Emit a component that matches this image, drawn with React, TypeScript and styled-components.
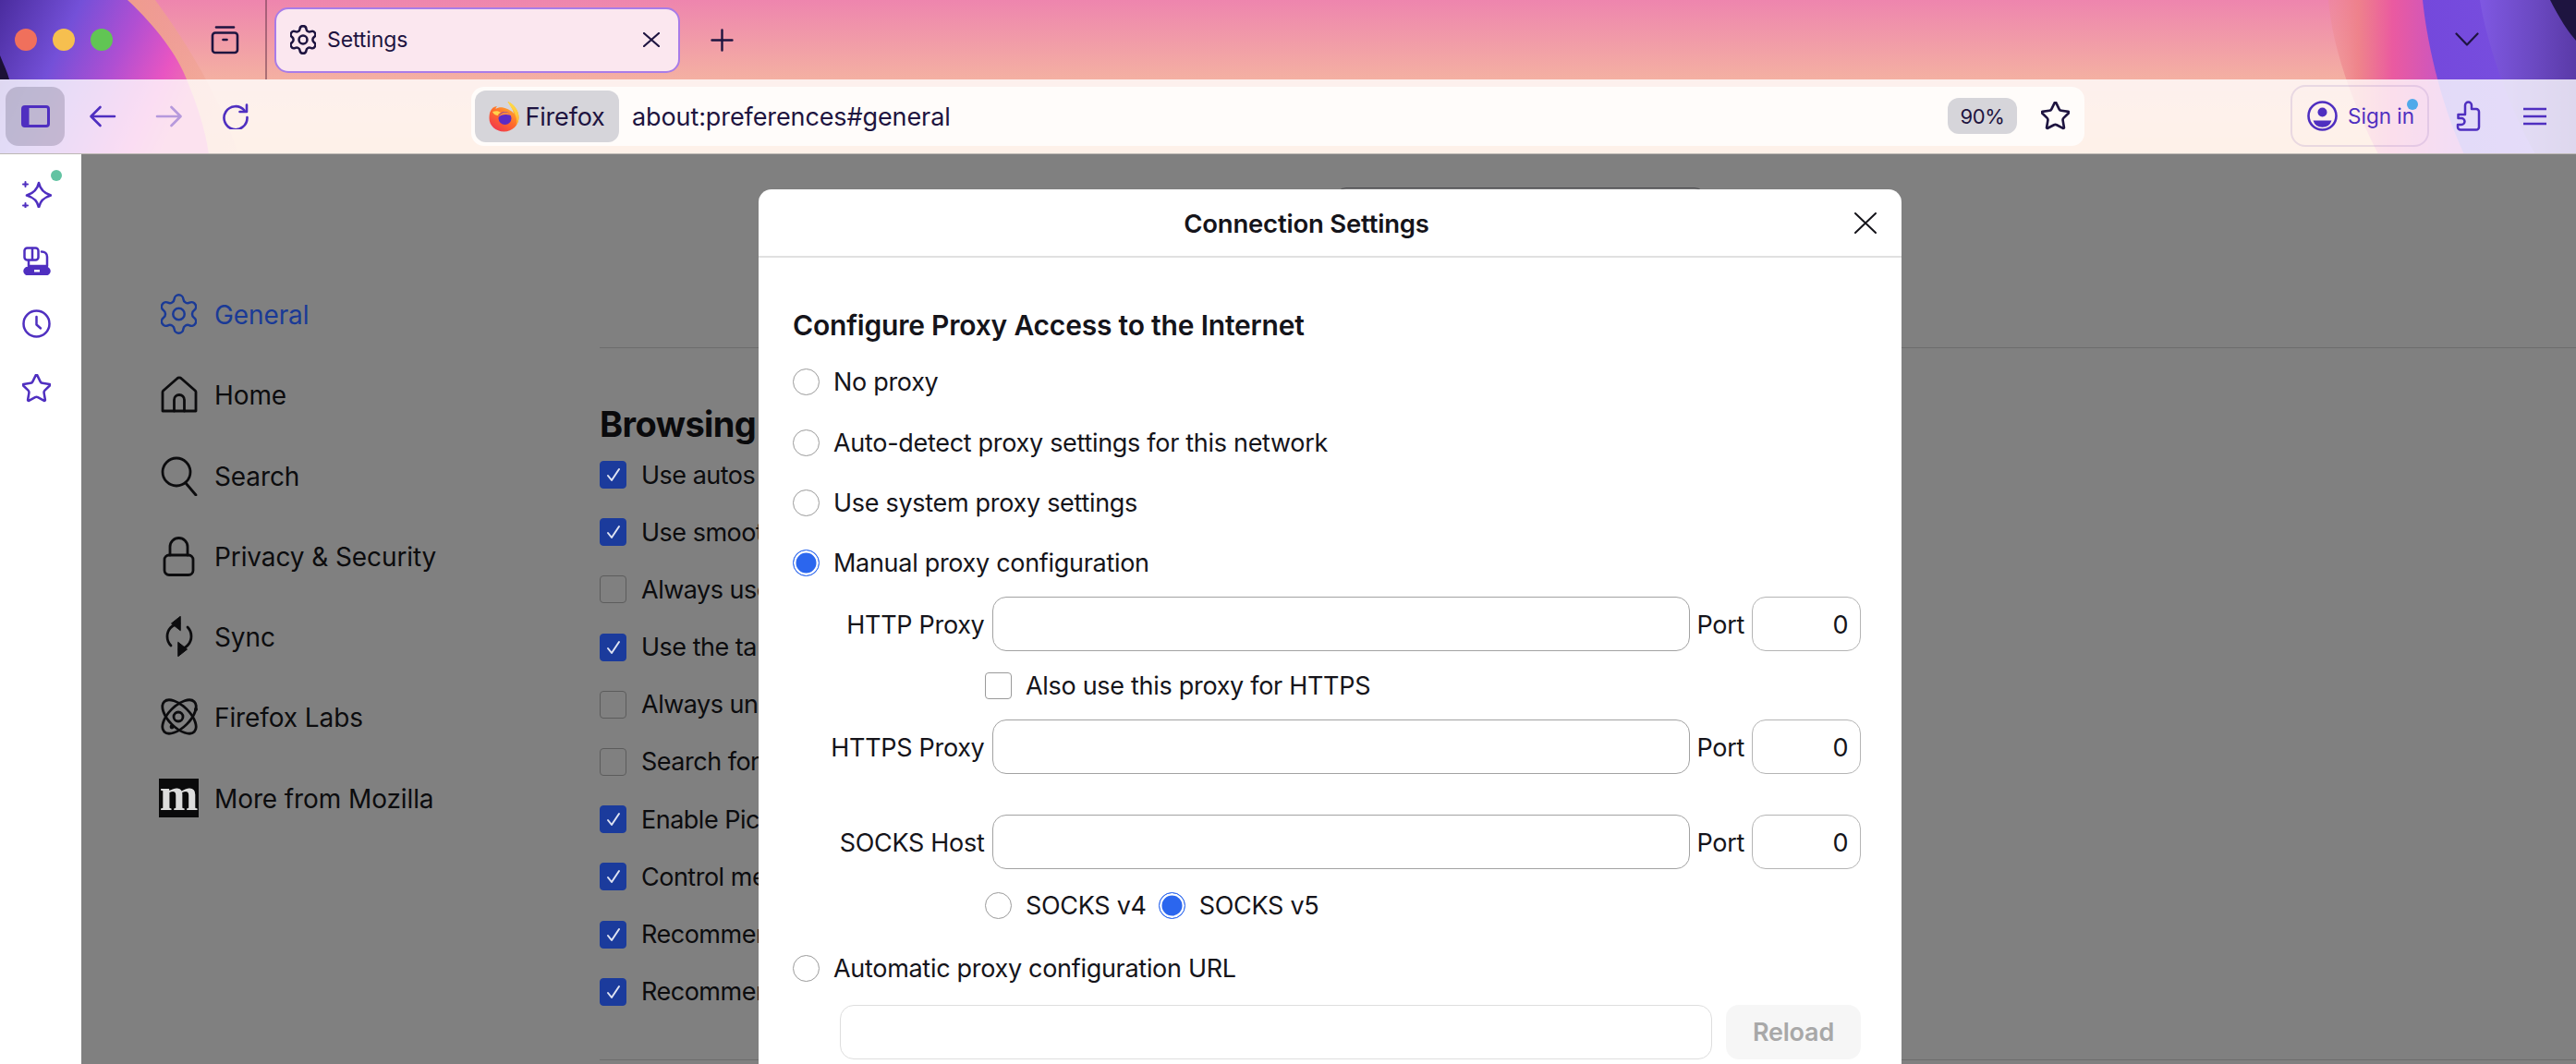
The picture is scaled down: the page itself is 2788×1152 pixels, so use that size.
import React from "react";
import styled, { createGlobalStyle } from "styled-components";

const Global = createGlobalStyle`
  html, body { margin: 0; padding: 0; width: 2788px; height: 1152px; overflow: hidden; background: #fff; }
  * { box-sizing: border-box; }
  body { font-family: Inter, "Liberation Sans", sans-serif; color: #15141a; }
`;

const Page = styled.div`
  position: relative;
  width: 2788px;
  height: 1152px;
  overflow: hidden;
  display: flex;
  flex-direction: column;
`;

const Wallpaper = styled.svg`
  position: absolute;
  left: 0;
  top: 0;
  width: 2788px;
  height: 167px;
`;

const TabBar = styled.div`
  position: relative;
  height: 86px;
  flex: none;
  display: flex;
  align-items: center;
  color: #1e1440;
`;

const Lights = styled.div`
  display: flex;
  gap: 17px;
  margin-left: 16px;
`;

const Light = styled.span<{ $c: string }>`
  width: 24px;
  height: 24px;
  border-radius: 50%;
  background: ${(p) => p.$c};
`;

const ViewButton = styled.span`
  display: flex;
  margin-left: 106px;
`;

const TabDivider = styled.span`
  align-self: stretch;
  width: 1.5px;
  margin-left: 28px;
  background: rgba(110, 60, 80, 0.55);
`;

const Tab = styled.div`
  width: 439px;
  height: 71px;
  margin-left: 8.5px;
  padding: 0 20px 0 15px;
  display: flex;
  align-items: center;
  gap: 12px;
  border: 2.5px solid #a87ce8;
  border-radius: 15px;
  background: #fbe7ef;
`;

const TabTitle = styled.span`
  flex: 1;
  font-size: 23px;
  color: #1e1440;
  letter-spacing: -0.1px;
`;

const NewTab = styled.span`
  display: flex;
  margin-left: 33px;
`;

const TabList = styled.span`
  display: flex;
  margin-left: auto;
  margin-right: 105px;
  margin-top: -2px;
`;

const Toolbar = styled.div`
  position: relative;
  height: 81px;
  flex: none;
  display: flex;
  align-items: center;
  padding-bottom: 1px;
  background: rgba(255, 255, 255, 0.8);
  border-bottom: 1.5px solid #bdb8b4;
  color: #4f2fc0;
`;

const SidebarToggle = styled.span`
  width: 64px;
  height: 64px;
  margin-left: 6px;
  border-radius: 14px;
  display: flex;
  align-items: center;
  justify-content: center;
  background: rgba(60, 55, 80, 0.22);
`;

const ToolButton = styled.span<{ $left: number; $dim?: boolean }>`
  display: flex;
  margin-left: ${(p) => p.$left}px;
  opacity: ${(p) => (p.$dim ? 0.4 : 1)};
`;

const UrlBar = styled.div`
  width: 1746px;
  height: 64px;
  margin-left: 240px;
  padding-left: 4px;
  display: flex;
  align-items: center;
  border-radius: 14px;
  background: #fffcfa;
  color: #1e1440;
`;

const IdentityChip = styled.span`
  width: 156px;
  height: 56px;
  padding-left: 15px;
  display: flex;
  align-items: center;
  gap: 6.5px;
  border-radius: 12px;
  background: #d6d5da;
  font-size: 27px;
  letter-spacing: -0.2px;
`;

const IdentityLabel = styled.span`
  padding-top: 2px;
`;

const UrlText = styled.span`
  margin-left: 14px;
  padding-top: 2px;
  font-size: 27px;
  letter-spacing: -0.1px;
`;

const ZoomChip = styled.span`
  width: 75px;
  height: 39px;
  margin-left: auto;
  display: flex;
  align-items: center;
  justify-content: center;
  border-radius: 12px;
  background: #d6d5da;
  font-size: 22px;
  letter-spacing: -0.3px;
`;

const UrlStar = styled.span`
  display: flex;
  margin: 0 16px 0 26px;
`;

const SignIn = styled.span`
  position: relative;
  width: 150px;
  height: 67px;
  margin-left: 223px;
  padding-left: 16px;
  display: flex;
  align-items: center;
  gap: 11px;
  border: 2px solid rgba(150, 120, 190, 0.2);
  border-radius: 16px;
  font-size: 22.5px;
`;

const SignInDot = styled.span`
  position: absolute;
  right: 10px;
  top: 13px;
  width: 12px;
  height: 12px;
  border-radius: 50%;
  background: #4fa9ea;
`;

const Main = styled.div`
  position: relative;
  flex: 1;
  min-height: 0;
  display: flex;
`;

const Rail = styled.div`
  width: 88px;
  flex: none;
  padding: 28px 0 0 24px;
  background: #fff;
  color: #4f2fc0;
  display: flex;
  flex-direction: column;
`;

const RailItem = styled.span<{ $top: number }>`
  position: relative;
  display: flex;
  margin-top: ${(p) => p.$top}px;
`;

const RailDot = styled.span`
  position: absolute;
  left: 31px;
  top: -11px;
  width: 12px;
  height: 12px;
  border-radius: 50%;
  background: #62c3a2;
`;

const Dimmed = styled.div`
  flex: 1;
  display: flex;
  background: #808080;
  color: #0c0c0e;
`;

const Nav = styled.nav`
  width: 561px;
  flex: none;
  padding: 151px 0 0 84px;
  display: flex;
  flex-direction: column;
  gap: 43.3px;
`;

const NavRow = styled.div<{ $active?: boolean }>`
  height: 44px;
  display: flex;
  align-items: center;
  gap: 17px;
  font-size: 28px;
  letter-spacing: -0.1px;
  color: ${(p) => (p.$active ? "#1a3a96" : "#0c0c0e")};
`;

const NavLabel = styled.span`
  padding-top: 2px;
`;

const NavIcon = styled.span`
  width: 43px;
  height: 44px;
  display: flex;
  align-items: center;
  justify-content: center;
  flex: none;
`;

const MozillaMark = styled.span`
  width: 43px;
  height: 42px;
  display: flex;
  align-items: center;
  justify-content: center;
  background: #0a0a0b;
  color: #dcdcdc;
  font-family: "Liberation Serif", serif;
  font-weight: 700;
  font-size: 50px;
  line-height: 34px;
  letter-spacing: 0;
  padding-bottom: 8px;
`;

const Pane = styled.div`
  flex: 1;
  min-width: 0;
  padding-top: 36px;
  display: flex;
  flex-direction: column;
`;

const SearchBox = styled.div`
  width: 401px;
  height: 60px;
  flex: none;
  margin-left: 796px;
  border: 1.5px solid #4c4c50;
  border-radius: 12px;
`;

const Rule = styled.div<{ $top: number }>`
  height: 1px;
  flex: none;
  margin-top: ${(p) => p.$top}px;
  background: #6c6c6c;
`;

const SectionTitle = styled.h2`
  height: 46px;
  flex: none;
  margin: 59px 0 16px;
  font-size: 38px;
  line-height: 46px;
  font-weight: 700;
  letter-spacing: -0.6px;
  color: #0a0a0c;
`;

const CheckList = styled.div`
  display: flex;
  flex-direction: column;
  gap: 30.2px;
  flex: none;
`;

const CheckRow = styled.div`
  height: 32px;
  display: flex;
  align-items: center;
  gap: 16px;
  font-size: 27px;
  letter-spacing: -0.5px;
  white-space: nowrap;
`;

const PageCheck = styled.span<{ $on?: boolean }>`
  width: 29px;
  height: 30px;
  flex: none;
  display: flex;
  align-items: center;
  justify-content: center;
  border-radius: 4px;
  border: 1.5px solid ${(p) => (p.$on ? "#1b3b9c" : "#5c5c5c")};
  background: ${(p) => (p.$on ? "#1b3b9c" : "transparent")};
  color: #dfe3f2;
`;

const Dialog = styled.div`
  position: absolute;
  left: 821px;
  top: 38px;
  width: 1237px;
  height: 1000px;
  background: #fff;
  border-radius: 14px;
  color: #15141a;
`;

const DialogHead = styled.div`
  height: 74px;
  display: flex;
  align-items: center;
  border-bottom: 2px solid #e0e0e0;
`;

const DialogTitle = styled.h1`
  flex: 1;
  margin: 0;
  padding-top: 2px;
  text-align: center;
  font-size: 27.5px;
  font-weight: 600;
  letter-spacing: -0.2px;
`;

const DialogClose = styled.span`
  margin-right: 27px;
  display: flex;
`;

const DialogBody = styled.div`
  padding: 53px 44px 0 37px;
  display: flex;
  flex-direction: column;
`;

const ProxyHeading = styled.h3`
  height: 40px;
  margin: 0 0 26px;
  font-size: 30px;
  line-height: 40px;
  font-weight: 600;
  letter-spacing: -0.2px;
`;

const OptionRow = styled.label<{ $top?: number; $indent?: number }>`
  height: 30px;
  display: flex;
  align-items: center;
  gap: 15px;
  margin-top: ${(p) => p.$top ?? 0}px;
  margin-left: ${(p) => p.$indent ?? 0}px;
  padding-top: 1px;
  font-size: 27px;
  letter-spacing: -0.3px;
  white-space: nowrap;
`;

const Radio = styled.input.attrs({ type: "radio" })`
  appearance: none;
  width: 29px;
  height: 29px;
  margin: -1px 0 0;
  flex: none;
  border-radius: 50%;
  border: 1.5px solid #9a9a9a;
  background: #fff;
  &:checked {
    border-color: #2b66ee;
    background: #2b66ee;
    box-shadow: inset 0 0 0 2.5px #fff;
  }
`;

const Check = styled.input.attrs({ type: "checkbox" })`
  appearance: none;
  width: 29px;
  height: 29px;
  margin: -1px 0 0;
  flex: none;
  border-radius: 4px;
  border: 1.5px solid #9a9a9a;
  background: #fff;
`;

const ProxyRow = styled.div<{ $top: number }>`
  height: 59px;
  margin-top: ${(p) => p.$top}px;
  display: grid;
  grid-template-columns: 207.5px 755px 51px 118px;
  column-gap: 8px;
  align-items: center;
  font-size: 27px;
  letter-spacing: -0.3px;
`;

const ProxyLabel = styled.span`
  padding-top: 1px;
  text-align: right;
  white-space: nowrap;
`;

const PortLabel = styled.span`
  padding-top: 1px;
`;

const Field = styled.input`
  height: 59px;
  width: 100%;
  min-width: 0;
  padding: 1px 26px 0;
  border: 1.5px solid #a2a2a2;
  border-radius: 15px;
  background: #fff;
  font: inherit;
  color: inherit;
  outline: none;
`;

const PortField = styled(Field)`
  text-align: right;
  padding: 1px 12px 0;
  border-color: #b4b4b4;
`;

const RadioPair = styled.div`
  display: flex;
  align-items: center;
  gap: 13px;
  margin-top: 24px;
  margin-left: 208px;
  height: 30px;
`;

const UrlRow = styled.div`
  height: 59px;
  margin: 25px 0 0 51px;
  display: flex;
  gap: 15px;
`;

const UrlField = styled(Field)`
  flex: 1;
  border-color: #dedede;
`;

const ReloadButton = styled.button`
  width: 146px;
  height: 59px;
  flex: none;
  border: 0;
  border-radius: 14px;
  background: #f6f6f6;
  color: #a8a8a8;
  font: 600 27px Inter, "Liberation Sans", sans-serif;
  letter-spacing: -0.2px;
`;

const STROKE = { fill: "none", stroke: "currentColor", strokeLinecap: "round", strokeLinejoin: "round" } as const;

const GEAR =
  "M9.671 4.136a2.34 2.34 0 0 1 4.659 0 2.34 2.34 0 0 0 3.319 1.915 2.34 2.34 0 0 1 2.33 4.033 2.34 2.34 0 0 0 0 3.831 2.34 2.34 0 0 1-2.33 4.033 2.34 2.34 0 0 0-3.319 1.915 2.34 2.34 0 0 1-4.659 0 2.34 2.34 0 0 0-3.32-1.915 2.34 2.34 0 0 1-2.33-4.033 2.34 2.34 0 0 0 0-3.831A2.34 2.34 0 0 1 6.35 6.051a2.34 2.34 0 0 0 3.319-1.915";
const STAR =
  "M11.525 2.295a.53.53 0 0 1 .95 0l2.31 4.679a2.123 2.123 0 0 0 1.595 1.16l5.166.756a.53.53 0 0 1 .294.904l-3.736 3.638a2.123 2.123 0 0 0-.611 1.878l.882 5.14a.53.53 0 0 1-.771.56l-4.618-2.428a2.122 2.122 0 0 0-1.973 0L6.396 21.01a.53.53 0 0 1-.77-.56l.881-5.139a2.122 2.122 0 0 0-.611-1.879L2.16 9.795a.53.53 0 0 1 .294-.906l5.165-.755a2.122 2.122 0 0 0 1.597-1.16z";

const Gear = ({ w, h, sw }: { w: number; h: number; sw: number }) => (
  <svg width={w} height={h} viewBox="2.6 1.4 18.8 21.2" {...STROKE} strokeWidth={sw}>
    <path d={GEAR} />
    <circle cx="12" cy="12" r="3" />
  </svg>
);

const Star = ({ size, sw }: { size: number; sw: number }) => (
  <svg width={size} height={size} viewBox="1.5 1.5 21 21" {...STROKE} strokeWidth={sw}>
    <path d={STAR} />
  </svg>
);

const Cross = ({ w, h, sw }: { w: number; h: number; sw: number }) => (
  <svg width={w} height={h} viewBox={`0 0 ${w} ${h}`} {...STROKE} strokeWidth={sw}>
    <path d={`M1 1 ${w - 1} ${h - 1}M${w - 1} 1 1 ${h - 1}`} />
  </svg>
);

const FirefoxLogo = () => (
  <svg width="33" height="34" viewBox="0 0 33 34">
    <defs>
      <linearGradient id="ffo" x1="0.8" y1="0.1" x2="0.2" y2="1">
        <stop offset="0" stopColor="#ffb52e" />
        <stop offset="0.5" stopColor="#ff6b2b" />
        <stop offset="1" stopColor="#f0344f" />
      </linearGradient>
      <linearGradient id="ffy" x1="0.6" y1="0" x2="0.4" y2="1">
        <stop offset="0" stopColor="#ffe24a" />
        <stop offset="1" stopColor="#ffab2e" />
      </linearGradient>
    </defs>
    <path d="M1.5 12C3 8 6 6 9 6c-1 1-1.500 2-1.500 3 2-1.500 5-2 8-1.500C21 8.500 26 12 27 14c-1-6-4-9-6.500-13 6 2.500 12 9 12 17 0 8.500-7 15.500-16 15.500S.500 27 .500 19c0-2.500.300-5 1-7z" fill="url(#ffo)" />
    <path d="M20.500 1c6 2.500 12 9 12 17 0 3-1 6-3 8.500 1-3 1-6.500-.500-10-1.500-5-5-9-8.500-15.500z" fill="url(#ffy)" />
    <path d="M4 12c3-1 7-1 9 1-2 .500-3 1.500-3 3-2.500 0-5-1.500-6-4z" fill="#ffd34d" />
    <circle cx="17.500" cy="19" r="7" fill="#5b2bc6" />
    <path d="M10.500 18c1-3 4-5.500 7.500-5.500 3.500 0 6.500 2 7.500 5-1.500-1.800-4-2.500-7-2.500-3.500 0-6.500 1-8 3z" fill="#ff8a3c" />
  </svg>
);

const Backdrop = () => (
  <Wallpaper viewBox="0 0 2788 167" preserveAspectRatio="none">
    <defs>
      <linearGradient id="wpBase" x1="0" y1="0" x2="0" y2="1">
        <stop offset="0" stopColor="#ee85ae" />
        <stop offset="0.515" stopColor="#f4b0a2" />
        <stop offset="0.52" stopColor="#f4b5a6" />
        <stop offset="1" stopColor="#fbba8e" />
      </linearGradient>
      <linearGradient id="wpHalo" x1="0" y1="0" x2="1" y2="0">
        <stop offset="0.55" stopColor="#ef9c8e" />
        <stop offset="1" stopColor="#f0a594" stopOpacity="0.35" />
      </linearGradient>
      <linearGradient id="wpLeft" x1="0" y1="0" x2="1" y2="0.35">
        <stop offset="0" stopColor="#4a2c9e" />
        <stop offset="0.35" stopColor="#7450d8" />
        <stop offset="0.62" stopColor="#b04fd2" />
        <stop offset="0.85" stopColor="#e855c2" />
        <stop offset="1" stopColor="#ee6fb0" />
      </linearGradient>
      <linearGradient id="wpRight" x1="0" y1="0" x2="1" y2="0">
        <stop offset="0" stopColor="#ee8a90" stopOpacity="0.35" />
        <stop offset="0.12" stopColor="#ee8088" stopOpacity="0.9" />
        <stop offset="0.26" stopColor="#ea5aa0" />
        <stop offset="0.5" stopColor="#c455c8" />
        <stop offset="1" stopColor="#b14fc4" />
      </linearGradient>
      <linearGradient id="wpRight2" x1="0" y1="0" x2="1" y2="0">
        <stop offset="0" stopColor="#7448dc" />
        <stop offset="1" stopColor="#7a52e0" />
      </linearGradient>
      <linearGradient id="wpRight3" x1="0" y1="0" x2="1" y2="0">
        <stop offset="0" stopColor="#7f58e2" />
        <stop offset="0.6" stopColor="#6a48c0" />
        <stop offset="1" stopColor="#5a3aa8" />
      </linearGradient>
    </defs>
    <rect width="2788" height="167" fill="url(#wpBase)" />
    <path d="M0 0H168C205 50 240 110 258 167H0Z" fill="url(#wpHalo)" />
    <path d="M0 0H138C170 30 192 60 202 86C214 115 222 140 226 167H0Z" fill="url(#wpLeft)" />
    <path d="M0 60C4 70 8 78 10 86H0Z" fill="#1c1136" />
    <path d="M2520 0C2524 50 2545 110 2574 167H2788V0Z" fill="url(#wpRight)" />
    <path d="M2622 0C2626 40 2640 110 2667 167H2788V0Z" fill="url(#wpRight2)" />
    <path d="M2684 0C2690 40 2712 110 2744 167H2788V0Z" fill="url(#wpRight3)" />
    <path d="M2760 0C2770 20 2780 35 2788 44V0Z" fill="#1e1440" />
  </Wallpaper>
);

const pageRows: [string, boolean][] = [
  ["Use autos", true],
  ["Use smoot", true],
  ["Always use", false],
  ["Use the ta", true],
  ["Always und", false],
  ["Search for", false],
  ["Enable Pic", true],
  ["Control me", true],
  ["Recommen", true],
  ["Recommen", true],
];

const HostRow = ({ label, top }: { label: string; top: number }) => (
  <ProxyRow $top={top}>
    <ProxyLabel>{label}</ProxyLabel>
    <Field />
    <PortLabel>Port</PortLabel>
    <PortField defaultValue="0" />
  </ProxyRow>
);

export default function App() {
  return (
    <Page>
      <Global />
      <Backdrop />
      <TabBar>
        <Lights>
          <Light $c="#f0705c" />
          <Light $c="#f6bf4f" />
          <Light $c="#61c554" />
        </Lights>
        <ViewButton>
          <svg width="31" height="32" viewBox="0 0 31 32" {...STROKE} strokeWidth="2.6">
            <path d="M6 2.500h19" />
            <rect x="2" y="8.500" width="27" height="21.500" rx="3" />
            <path d="M13.500 16h4" />
          </svg>
        </ViewButton>
        <TabDivider />
        <Tab>
          <Gear w={28} h={32} sw={1.7} />
          <TabTitle>Settings</TabTitle>
          <Cross w={18} h={16} sw={2.2} />
        </Tab>
        <NewTab>
          <svg width="25" height="25" viewBox="0 0 25 25" {...STROKE} strokeWidth="2.4">
            <path d="M12.500 1.500v22M1.500 12.500h22" />
          </svg>
        </NewTab>
        <TabList>
          <svg width="26" height="15" viewBox="0 0 26 15" {...STROKE} strokeWidth="2.2">
            <path d="M1.500 1.500 13 13.500 24.500 1.500" />
          </svg>
        </TabList>
      </TabBar>
      <Toolbar>
        <SidebarToggle>
          <svg width="31" height="24" viewBox="0 0 31 24">
            <rect x="1.500" y="1.500" width="28" height="21" rx="2.500" fill="none" stroke="currentColor" strokeWidth="3" />
            <rect x="1.500" y="1.500" width="7" height="21" fill="currentColor" />
          </svg>
        </SidebarToggle>
        <ToolButton $left={26}>
          <svg width="30" height="24" viewBox="0 0 30 24" {...STROKE} strokeWidth="2.6">
            <path d="M28 12H3M12.500 2 2.500 12l10 10" />
          </svg>
        </ToolButton>
        <ToolButton $left={42} $dim>
          <svg width="30" height="24" viewBox="0 0 30 24" {...STROKE} strokeWidth="2.6">
            <path d="M2 12h25M17.500 2l10 10-10 10" />
          </svg>
        </ToolButton>
        <ToolButton $left={42}>
          <svg width="30" height="28" viewBox="0 0 30 28" {...STROKE} strokeWidth="2.6">
            <path d="M24.500 7.500A12.500 12.500 0 1 0 27.500 15" />
            <path d="M27 1.500v7.500h-7.500" />
          </svg>
        </ToolButton>
        <UrlBar>
          <IdentityChip>
            <FirefoxLogo />
            <IdentityLabel>Firefox</IdentityLabel>
          </IdentityChip>
          <UrlText>about:preferences#general</UrlText>
          <ZoomChip>90%</ZoomChip>
          <UrlStar>
            <Star size={31} sw={1.8} />
          </UrlStar>
        </UrlBar>
        <SignIn>
          <svg width="33" height="33" viewBox="0 0 33 33">
            <circle cx="16.500" cy="16.500" r="15" fill="none" stroke="currentColor" strokeWidth="2.600" />
            <circle cx="16.500" cy="12.500" r="5" fill="currentColor" />
            <path d="M6.500 21.500h20a10.500 10.500 0 0 1-20 0z" fill="currentColor" />
          </svg>
          Sign in
          <SignInDot />
        </SignIn>
        <ToolButton $left={29}>
          <svg width="27" height="33" viewBox="0 0 27 33" {...STROKE} strokeWidth="2.500">
            <path d="M10 9V5a3.500 3.500 0 0 1 7 0v4h5a3 3 0 0 1 3 3v16.500a3 3 0 0 1-3 3H5a3 3 0 0 1-3-3V26h4a3.500 3.500 0 0 0 0-7H2.500v-4H10z" />
          </svg>
        </ToolButton>
        <ToolButton $left={46}>
          <svg width="25" height="20" viewBox="0 0 25 20" fill="none" stroke="currentColor" strokeWidth="2.600">
            <path d="M0 2h25M0 10h25M0 18h25" />
          </svg>
        </ToolButton>
      </Toolbar>
      <Main>
        <Rail>
          <RailItem $top={0}>
            <svg width="32" height="30" viewBox="0 0 32 30" {...STROKE} strokeWidth="2.600">
              <path d="M18 3c1.500 7 5 11 13 13.500-8 2.500-11.500 6-13 13-1.500-7-5-10.500-13-13 8-2.500 11.500-6.500 13-13.500z" />
              <path d="M3.500 2v5M1 4.500h5M3.500 25v5M1 27.500h5" strokeWidth="2" />
            </svg>
            <RailDot />
          </RailItem>
          <RailItem $top={42}>
            <svg width="31" height="31" viewBox="0 0 31 31" {...STROKE} strokeWidth="2.500">
              <rect x="2.500" y="1.500" width="15" height="13" rx="3" />
              <path d="M11 2v12" />
              <path d="M21 5.500c3.500 0 6 2 6 5.500v10H7v-6" />
              <rect x="2.500" y="23" width="27" height="7" rx="3.500" fill="currentColor" />
              <rect x="13" y="25" width="6" height="2.500" fill="#fff" stroke="none" />
            </svg>
          </RailItem>
          <RailItem $top={37}>
            <svg width="31" height="31" viewBox="0 0 31 31" {...STROKE} strokeWidth="2.500">
              <circle cx="15.500" cy="15.500" r="14" />
              <path d="M15.500 8v8.500l4.500 4" />
            </svg>
          </RailItem>
          <RailItem $top={39}>
            <Star size={31} sw={1.7} />
          </RailItem>
        </Rail>
        <Dimmed>
          <Nav>
            <NavRow $active>
              <NavIcon>
                <Gear w={39} h={44} sw={1.2} />
              </NavIcon>
              <NavLabel>General</NavLabel>
            </NavRow>
            <NavRow>
              <NavIcon>
                <svg width="40" height="40" viewBox="0 0 40 40" {...STROKE} strokeWidth="2.800">
                  <path d="M2 38V17.500c0-.6.300-1.100.700-1.500L17.500 3a3.500 3.500 0 0 1 5 0l14.800 13c.4.400.7.900.7 1.500V38z" />
                  <path d="M14.500 38V26a5.500 5.500 0 0 1 11 0v12" />
                </svg>
              </NavIcon>
              <NavLabel>Home</NavLabel>
            </NavRow>
            <NavRow>
              <NavIcon>
                <svg width="40" height="44" viewBox="0 0 40 44" {...STROKE} strokeWidth="2.800">
                  <circle cx="17" cy="18" r="15" />
                  <path d="M27 30l11 13" />
                </svg>
              </NavIcon>
              <NavLabel>Search</NavLabel>
            </NavRow>
            <NavRow>
              <NavIcon>
                <svg width="35" height="44" viewBox="0 0 35 44" {...STROKE} strokeWidth="2.800">
                  <rect x="2" y="21" width="31" height="21.500" rx="5" />
                  <path d="M8 21v-9a9.500 9.500 0 0 1 19 0v9" />
                </svg>
              </NavIcon>
              <NavLabel>Privacy &amp; Security</NavLabel>
            </NavRow>
            <NavRow>
              <NavIcon>
                <svg width="30" height="44" viewBox="0 0 30 44" {...STROKE} strokeWidth="2.800">
                  <path d="M15 8C7 9 2 15 2 22c0 4 1.500 7.500 4 10" />
                  <path d="M16 .500 6.500 8l9.500 7.500z" fill="currentColor" strokeWidth="1" />
                  <path d="M15 36c8-1 13-7 13-14 0-4-1.500-7.500-4-10" />
                  <path d="M14 28.500 23.500 36 14 43.500z" fill="currentColor" strokeWidth="1" />
                </svg>
              </NavIcon>
              <NavLabel>Sync</NavLabel>
            </NavRow>
            <NavRow>
              <NavIcon>
                <svg width="42" height="42" viewBox="0 0 42 42" {...STROKE} strokeWidth="2.800">
                  <ellipse cx="21" cy="21" rx="23" ry="11.500" transform="rotate(45 21 21)" />
                  <ellipse cx="21" cy="21" rx="23" ry="11.500" transform="rotate(-45 21 21)" />
                  <circle cx="20" cy="21" r="5" />
                  <circle cx="39" cy="13" r="2" fill="currentColor" stroke="none" />
                  <circle cx="13" cy="32" r="2.400" fill="currentColor" stroke="none" />
                </svg>
              </NavIcon>
              <NavLabel>Firefox Labs</NavLabel>
            </NavRow>
            <NavRow>
              <NavIcon>
                <MozillaMark>m</MozillaMark>
              </NavIcon>
              <NavLabel>More from Mozilla</NavLabel>
            </NavRow>
          </Nav>
          <Pane>
            <SearchBox />
            <Rule $top={113} />
            <SectionTitle>Browsing</SectionTitle>
            <CheckList>
              {pageRows.map(([text, on], i) => (
                <CheckRow key={i}>
                  <PageCheck $on={on}>
                    {on && (
                      <svg width="16" height="16" viewBox="0 0 16 16" {...STROKE} strokeWidth="2">
                        <path d="M2 9l4 5 8-12" />
                      </svg>
                    )}
                  </PageCheck>
                  {text}
                </CheckRow>
              ))}
            </CheckList>
            <Rule $top={57} />
          </Pane>
        </Dimmed>
        <Dialog>
          <DialogHead>
            <DialogTitle>Connection Settings</DialogTitle>
            <DialogClose>
              <Cross w={24} h={23} sw={2} />
            </DialogClose>
          </DialogHead>
          <DialogBody>
            <ProxyHeading>Configure Proxy Access to the Internet</ProxyHeading>
            <OptionRow>
              <Radio name="proxy" />
              No proxy
            </OptionRow>
            <OptionRow $top={36}>
              <Radio name="proxy" />
              Auto-detect proxy settings for this network
            </OptionRow>
            <OptionRow $top={35}>
              <Radio name="proxy" />
              Use system proxy settings
            </OptionRow>
            <OptionRow $top={35}>
              <Radio name="proxy" defaultChecked />
              Manual proxy configuration
            </OptionRow>
            <HostRow label="HTTP Proxy" top={22} />
            <OptionRow $top={22} $indent={208}>
              <Check />
              Also use this proxy for HTTPS
            </OptionRow>
            <HostRow label="HTTPS Proxy" top={22} />
            <HostRow label="SOCKS Host" top={44} />
            <RadioPair>
              <OptionRow>
                <Radio name="socks" />
                SOCKS v4
              </OptionRow>
              <OptionRow>
                <Radio name="socks" defaultChecked />
                SOCKS v5
              </OptionRow>
            </RadioPair>
            <OptionRow $top={38}>
              <Radio name="proxy" />
              Automatic proxy configuration URL
            </OptionRow>
            <UrlRow>
              <UrlField disabled />
              <ReloadButton disabled>Reload</ReloadButton>
            </UrlRow>
          </DialogBody>
        </Dialog>
      </Main>
    </Page>
  );
}
